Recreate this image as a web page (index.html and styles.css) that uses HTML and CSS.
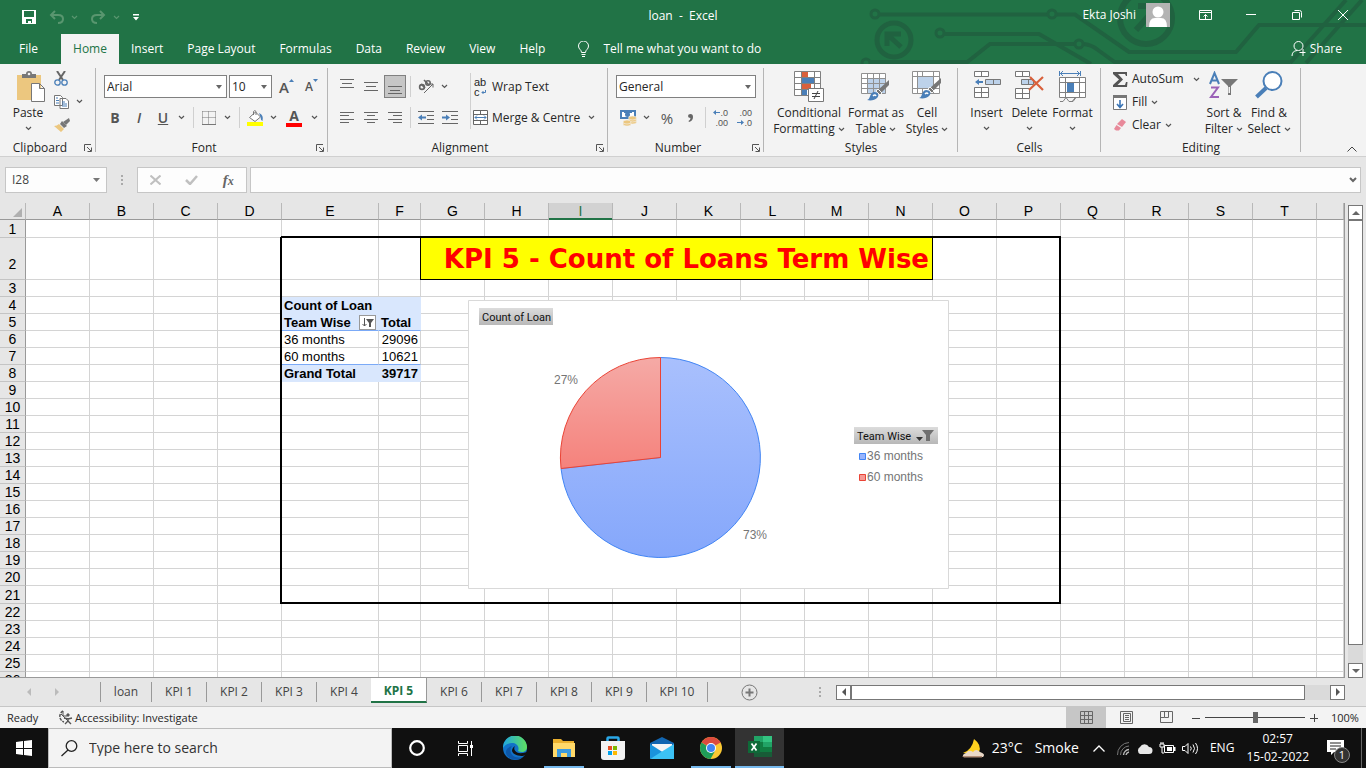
FILE: index.html
```html
<!DOCTYPE html>
<html lang="en">
<head>
<meta charset="utf-8">
<title>loan - Excel</title>
<link rel="stylesheet" href="styles.css">
</head>
<body>
<svg class="sprite" aria-hidden="true">
  <symbol id="chev" viewBox="0 0 7 5"><path d="M1 1l2.500 2.500L6 1" fill="none" stroke="currentColor" stroke-width="1.200"/></symbol>
  <symbol id="launch" viewBox="0 0 8 8"><path d="M.5 7V.5H7M3 3l4 4M7.500 3.500v4h-4" fill="none" stroke="#555"/></symbol>
  <symbol id="brush" viewBox="0 0 24 22"><path d="M23 1v5l-8 8-3-3z" fill="#777"/><path d="M12 10l4 4-2 2-4-4z" fill="#777" stroke="#f3f3f3"/><path d="M1 21c4-1 2-7 7-8 4 0 6 3 3 6-2 2-6 3-10 2z" fill="#4a7fb8"/><path d="M7 17q2-2 3 0" stroke="#fff" fill="none" stroke-width="1.500"/></symbol>
</svg>

<header class="top">
  <svg class="circuit" width="526" height="64" viewBox="0 0 526 64" fill="none" stroke="#206240" stroke-width="4" aria-hidden="true">
    <circle cx="35" cy="14" r="4" stroke-width="3"/><path d="M39 14.500h168M216 14.500h19L289 52h107l23-27h107"/>
    <circle cx="212" cy="14" r="4" stroke-width="3"/>
    <circle cx="100" cy="33" r="4" stroke-width="3"/><path d="M104 34h95l52 30"/>
    <path d="M126 63l24-19h85M244 44q8 1 14 6l18 13"/><circle cx="239" cy="44" r="4" stroke-width="3"/>
    <circle cx="26" cy="63" r="4" stroke-width="3"/><path d="M30 62h98M274 62h176"/>
    <circle cx="54" cy="40" r="17" stroke-width="5"/><path d="M47 46V34h14M48 35l13 12" stroke-width="5"/>
    <circle cx="306" cy="18" r="26" stroke-width="6"/><path d="M318 24V6h-20M316 8l-20 22" stroke-width="6"/>
    <path d="M450 63L506 0M466 63L522 0"/>
  </svg>
  <div class="titlebar">
    <div class="quick">
      <button aria-label="Save"><svg width="14" height="14"><path d="M0 0h14v14H0z" fill="#fff"/><path d="M2 1h10v6H2zM4 9h6v4H9v-2H6v2H4z" fill="#217346"/></svg></button>
      <button class="dim" aria-label="Undo"><svg width="15" height="14" fill="none" stroke="currentColor" stroke-width="2"><path d="M6 1L2 5l4 4M2 5h7q5 0 5 4t-5 4"/></svg><svg class="chev"><use href="#chev"/></svg></button>
      <button class="dim" aria-label="Redo"><svg width="15" height="14" fill="none" stroke="currentColor" stroke-width="2"><path d="M9 1l4 4-4 4M13 5H6Q1 5 1 9t5 4"/></svg><svg class="chev"><use href="#chev"/></svg></button>
      <button aria-label="Customise"><svg width="6" height="7"><path d="M0 0h6v1.500H0zM0 3h6L3 6.500z" fill="#fff"/></svg></button>
    </div>
    <div class="doc">loan&nbsp; -&nbsp; Excel</div>
    <div class="account">
      <span>Ekta Joshi</span>
      <svg width="24" height="24"><path d="M0 0h24v24H0z" fill="#b3b3b3"/><circle cx="12" cy="9" r="5.500" fill="#fff"/><path d="M3 24q0-9 6-9h6q6 0 6 9z" fill="#fff"/></svg>
    </div>
    <div class="window">
      <button aria-label="Ribbon options"><svg width="13" height="10" fill="none" stroke="#fff"><path d="M.5.500h12v9H.5zM.5 2.500h12M6.500 9V4.500M4.500 6.500l2-2 2 2"/></svg></button>
      <button aria-label="Minimise"><svg width="10" height="2"><path d="M0 0h10v1H0z" fill="#fff"/></svg></button>
      <button aria-label="Restore"><svg width="10" height="10" fill="none" stroke="#fff"><path d="M.5 2.500h7v7h-7zM2.500.500h5q2 0 2 2v5"/></svg></button>
      <button aria-label="Close"><svg width="10" height="10" stroke="#fff"><path d="M0 0l10 10M10 0L0 10"/></svg></button>
    </div>
  </div>
  <nav class="tabs">
    <button class="file">File</button><button class="on">Home</button><button>Insert</button><button>Page Layout</button><button>Formulas</button><button>Data</button><button>Review</button><button>View</button><button>Help</button>
    <button class="tell"><svg width="11" height="16" fill="none" stroke="#fff"><path d="M3.500 11.500c0-3-3-3-3-6.500a5 5 0 0110 0c0 3.500-3 3.500-3 6.500zM3.500 13.500h4M4 15.500h3"/></svg>Tell me what you want to do</button>
    <button class="share"><svg width="15" height="16" fill="none" stroke="#fff"><circle cx="7.500" cy="5" r="4.500"/><path d="M1 15q0-5 5-5.500M12 8v7M8.500 11.500h6"/></svg>Share</button>
  </nav>
</header>

<section class="ribbon">
  <div class="group clip">
    <div class="body">
      <button class="big paste"><svg width="28" height="31"><path d="M0 4h24v25H0z" fill="#ecc77f"/><path d="M5 3h4q0-3 3-3t3 3h4v4H5z" fill="#777"/><circle cx="12" cy="3" r="1.300" fill="#f3f3f3"/><path d="M14.500 12.500h8l5 5v13h-13zM22.500 12.500v5h5" fill="#fff" stroke="#777"/></svg><span>Paste</span><svg class="chev"><use href="#chev"/></svg></button>
      <div class="stack">
        <button aria-label="Cut"><svg width="14" height="15" fill="none"><path d="M3 0l6 9M11 0L5 9" stroke="#666" stroke-width="2"/><circle cx="3.500" cy="11.500" r="2.700" stroke="#4a7fb8" stroke-width="1.300"/><circle cx="10.500" cy="11.500" r="2.700" stroke="#4a7fb8" stroke-width="1.300"/></svg></button>
        <button aria-label="Copy"><svg width="15" height="14" fill="#fff" stroke="#777"><path d="M.5.500h6l2 2v8h-8zM6 3.500h6l2.500 2.500v7.500H6z"/><path d="M2 3h2M2 5.500h3M2 8h3M8 7h3M8 9h5M8 11h5" stroke="#4a7fb8"/></svg><svg class="chev"><use href="#chev"/></svg></button>
        <button aria-label="Format painter"><svg width="16" height="14"><path d="M15 0l1 3-4 4-3-3z" fill="#777"/><path d="M8 3l5 5-3 2-4-4z" fill="#777"/><path d="M5 6l5 5-3 3L0 8q3 0 5-2z" fill="#ecc77f"/></svg></button>
      </div>
    </div>
    <div class="caption"><span>Clipboard</span><button aria-label="Clipboard settings"><svg width="8" height="8"><use href="#launch"/></svg></button></div>
  </div>

  <div class="group font">
    <div class="body rows">
      <div class="row">
        <label class="combo name"><select aria-label="Font"><option>Arial</option></select></label>
        <label class="combo size"><select aria-label="Font size"><option>10</option></select></label>
        <button class="ib grow" aria-label="Increase font size"><b>A</b><svg width="5" height="3"><path d="M0 3h5L2.500 0z" fill="#4a7fb8"/></svg></button>
        <button class="ib shrink" aria-label="Decrease font size"><b>A</b><svg width="5" height="3"><path d="M0 0h5L2.500 3z" fill="#4a7fb8"/></svg></button>
      </div>
      <div class="row">
        <button class="ib"><b>B</b></button><button class="ib"><i>I</i></button><button class="ib"><u>U</u></button><button class="cb" aria-label="Underline styles"><svg class="chev"><use href="#chev"/></svg></button>
        <span class="sep"></span>
        <button class="ib" aria-label="Borders"><svg width="14" height="14" fill="none" stroke="#777" stroke-dasharray="1 1"><path d="M.5.500h13M.5.500v13M13.500.500v13M6.500.500v13M.5 6.500h13"/><path d="M0 13.500h14" stroke-dasharray="none"/></svg></button><button class="cb" aria-label="Border styles"><svg class="chev"><use href="#chev"/></svg></button>
        <span class="sep"></span>
        <button class="ib" aria-label="Fill colour"><svg width="17" height="16"><path d="M2.500 7.500l6-5.500 5 5-5.500 4.500zM6.500 5V1.500q1.500-2 2.500 0V5" fill="#fff" stroke="#777"/><path d="M12 3q5 2 3.500 8q-2-1-2-4z" fill="#4a7fb8"/><path d="M0 12h16v4H0z" fill="#ff0"/></svg></button><button class="cb" aria-label="Fill colours"><svg class="chev"><use href="#chev"/></svg></button>
        <button class="ib wide colour" aria-label="Font colour"><b>A</b></button><button class="cb" aria-label="Font colours"><svg class="chev"><use href="#chev"/></svg></button>
      </div>
    </div>
    <div class="caption"><span>Font</span><button aria-label="Font settings"><svg width="8" height="8"><use href="#launch"/></svg></button></div>
  </div>

  <div class="group align">
    <div class="body">
      <div class="rows">
        <div class="row">
          <button class="ib" aria-label="Top align"><svg width="14" height="16" stroke="#666"><path d="M0 .5h14M2 4.500h10M0 8.500h14"/></svg></button>
          <button class="ib" aria-label="Middle align"><svg width="14" height="16" stroke="#666"><path d="M0 3.500h14M2 7.500h10M0 11.500h14"/></svg></button>
          <button class="ib pressed" aria-label="Bottom align"><svg width="14" height="16" stroke="#666"><path d="M0 7.500h14M2 11.500h10M0 14.500h14"/></svg></button>
          <span class="sep"></span>
          <button class="ib" aria-label="Orientation"><svg width="17" height="15" fill="none" stroke="#666"><g stroke-width="1.600"><circle cx="4" cy="8" r="2.400"/><path d="M3 5l4 4M6 1l5 5"/><circle cx="10" cy="4" r="2.200"/></g><path d="M6 14L15 5M11.500 5H15v3.500"/></svg></button><button class="cb" aria-label="Orientations"><svg class="chev"><use href="#chev"/></svg></button>
        </div>
        <div class="row">
          <button class="ib" aria-label="Left align"><svg width="14" height="13" stroke="#666"><path d="M0 1.500h14M0 4.500h9M0 8.500h14M0 11.500h9"/></svg></button>
          <button class="ib" aria-label="Centre align"><svg width="14" height="13" stroke="#666"><path d="M0 1.500h14M3 4.500h8M0 8.500h14M3 11.500h8"/></svg></button>
          <button class="ib" aria-label="Right align"><svg width="14" height="13" stroke="#666"><path d="M0 1.500h14M5 4.500h9M0 8.500h14M5 11.500h9"/></svg></button>
          <span class="sep"></span>
          <button class="ib" aria-label="Decrease indent"><svg width="16" height="13"><path d="M0 .5h16M9 4.500h7M9 8.500h7M0 12.500h16" stroke="#666"/><path d="M0 6.500l4-3v2h4v2H4v2z" fill="#4a7fb8"/></svg></button>
          <button class="ib" aria-label="Increase indent"><svg width="16" height="13"><path d="M0 .5h16M9 4.500h7M9 8.500h7M0 12.500h16" stroke="#666"/><path d="M8 6.500l-4-3v2H0v2h4v2z" fill="#4a7fb8"/></svg></button>
        </div>
      </div>
      <span class="sep tall"></span>
      <div class="rows wraps">
        <button class="row wrap"><span class="abc"><span>ab</span><span>c<svg width="5" height="5" fill="none" stroke="#4a7fb8"><path d="M4.500 0v2.500H1M2.500 1L1 2.500 2.500 4"/></svg></span></span>Wrap Text</button>
        <div class="row"><button class="merge"><svg width="15" height="15" fill="#fff" stroke="#666"><path d="M.5.500h14v14H.5zM.5 4.500h14M.5 10.500h14M7.500.500v4M7.500 10.500v4"/><path d="M2 7.500h11M4 5.500l-2 2 2 2M11 5.500l2 2-2 2" stroke="#4a7fb8" fill="none"/></svg>Merge &amp; Centre</button><button class="cb" aria-label="Merge options"><svg class="chev"><use href="#chev"/></svg></button></div>
      </div>
    </div>
    <div class="caption"><span>Alignment</span><button aria-label="Alignment settings"><svg width="8" height="8"><use href="#launch"/></svg></button></div>
  </div>

  <div class="group number">
    <div class="body rows">
      <div class="row"><label class="combo format"><select aria-label="Number format"><option>General</option></select></label></div>
      <div class="row">
        <button class="ib" aria-label="Accounting format"><svg width="17" height="16"><path d="M0 0h16v9H0z" fill="#4a7fb8"/><path d="M2 2h2v1h8V2h2v5H2z" fill="#fff"/><circle cx="7.500" cy="4.500" r="2.500" fill="#4a7fb8"/><g fill="#ecc77f" stroke="#f3f3f3" stroke-width=".6"><ellipse cx="12.500" cy="12" rx="4" ry="2"/><ellipse cx="12.500" cy="10" rx="4" ry="2"/><ellipse cx="12.500" cy="8" rx="4" ry="2"/><ellipse cx="7" cy="14" rx="4" ry="2"/><ellipse cx="7" cy="12" rx="4" ry="2"/></g></svg></button><button class="cb" aria-label="Currencies"><svg class="chev"><use href="#chev"/></svg></button>
        <button class="ib pct">%</button><button class="ib comma" aria-label="Comma style"><svg width="5" height="8"><path d="M0 2q0-2 2.500-2T5 3q0 4-4 5l-.5-1q2-1 2-3Q0 4 0 2z" fill="#666"/></svg></button>
        <span class="sep"></span>
        <button class="ib dec" aria-label="Increase decimal"><span><svg width="7" height="5"><path d="M0 2.500L3 0v2h4v1H3v2z" fill="#4a7fb8"/></svg>.0</span><span>.00</span></button>
        <button class="ib dec" aria-label="Decrease decimal"><span>.00</span><span><svg width="7" height="5"><path d="M7 2.500L4 0v2H0v1h4v2z" fill="#4a7fb8"/></svg>.0</span></button>
      </div>
    </div>
    <div class="caption"><span>Number</span><button aria-label="Number settings"><svg width="8" height="8"><use href="#launch"/></svg></button></div>
  </div>

  <div class="group styles">
    <div class="body">
      <button class="big cond"><svg width="30" height="31"><path d="M.5.500h26v24H.5z" fill="#fff"/><path d="M8 1h6v5H8zM8 13h9v5H8z" fill="#d9603b"/><path d="M8 7h12v5H8zM8 19h5v5H8z" fill="#4a7fb8"/><path d="M.5.500h26v24H.5zM.5 6.500h26M.5 12.500h26M.5 18.500h26M7.500.500v24M20.500.500v24" fill="none" stroke="#808080"/><path d="M14.500 17.500h15v13h-15z" fill="#fff" stroke="#777"/><path d="M18 22.500h8M18 25.500h8M24 20l-4 8" stroke="#444"/></svg><span>Conditional<br>Formatting <svg class="chev"><use href="#chev"/></svg></span></button>
      <button class="big fmt"><svg width="30" height="31"><path d="M.5 2.500h24v20H.5z" fill="#fff"/><path d="M6 8h19v15H6z" fill="#bdd2ea"/><path d="M.5 2.500h24v20H.5zM.5 7.500h24M.5 12.500h24M.5 17.500h24M6.500 2.500v20M12.500 2.500v20M18.500 2.500v20" fill="none" stroke="#909090"/><use href="#brush" x="5" y="8" width="24" height="22"/></svg><span>Format as<br>Table <svg class="chev"><use href="#chev"/></svg></span></button>
      <button class="big cell"><svg width="30" height="31"><path d="M.5.500h27v22H.5z" fill="#fff"/><path d="M.5.500h27v22H.5zM.5 5.500h27M.5 17.500h27M5.500.500v22M21.500.500v22M10.500.500v22" fill="none" stroke="#909090"/><path d="M6 6h15v11H6z" fill="#bdd2ea"/><use href="#brush" x="6" y="6" width="24" height="22"/></svg><span>Cell<br>Styles <svg class="chev"><use href="#chev"/></svg></span></button>
    </div>
    <div class="caption"><span>Styles</span></div>
  </div>

  <div class="group cells">
    <div class="body">
      <button class="big"><svg width="28" height="31"><g fill="#fff" stroke="#777"><path d="M1.500.500h14v5h-14zM8.500.500v5M1.500 16.500h14v10h-14zM1.500 21.500h14M8.500 16.500v10"/><path d="M12.500 8.500h15v5h-15zM20.500 8.500v5" fill="#bdd2ea"/></g><path d="M2 11l4-3v2h4v2H6v2z" fill="#4a7fb8"/></svg><span>Insert</span><svg class="chev"><use href="#chev"/></svg></button>
      <button class="big"><svg width="30" height="31"><g fill="#fff" stroke="#777"><path d="M.5.500h14v5H.5zM7.500.500v5M.5 17.500h14v10H.5zM.5 22.500h14M7.500 17.500v10"/><path d="M6.500 8.500h12v5h-12zM13.500 8.500v5" fill="#bdd2ea"/></g><path d="M15 6l13 13M28 6L14 19" stroke="#d9603b" stroke-width="2.200"/></svg><span>Delete</span><svg class="chev"><use href="#chev"/></svg></button>
      <button class="big"><svg width="28" height="31" fill="none"><path d="M.5 6.500h26v20H.5z" fill="#fff"/><path d="M.5 6.500h26v20H.5zM.5 11.500h26M.5 21.500h26M6.500 6.500v20M20.500 6.500v20M1 30.500h3l3-4 3 4h4l3-4M13.500 30l3-3.500" stroke="#808080"/><path d="M8 12h7v9H8z" fill="#4a7fb8"/><path d="M1 2.500h20M4 0L1.500 2.500 4 5M18 0l2.500 2.500L18 5M.5 0v5M21.500 0v5" stroke="#4a7fb8"/></svg><span>Format</span><svg class="chev"><use href="#chev"/></svg></button>
    </div>
    <div class="caption"><span>Cells</span></div>
  </div>

  <div class="group editing">
    <div class="body">
      <div class="lines">
        <button><svg width="15" height="15"><path d="M0 0h14v4h-1l-1-2H5l5 5.500L4.500 13H12l1-3h1.500l-.5 5H0v-2l6-5.500L0 2z" fill="#555"/></svg><span>AutoSum</span><svg class="chev far"><use href="#chev"/></svg></button>
        <button><svg width="15" height="15"><path d="M.5.500h13v14H.5z" fill="#fff" stroke="#777"/><path d="M0 0h14v3H0z" fill="#777"/><path d="M7 5v7M4 9l3 3.500L10 9" fill="none" stroke="#3a74b4" stroke-width="1.600"/></svg><span>Fill</span><svg class="chev"><use href="#chev"/></svg></button>
        <button><svg width="15" height="15"><path d="M9 1l4 3-4 5-5-3z" fill="#e8899a"/><path d="M3.500 7l4.500 3-2 2.500H3L1 11z" fill="#e8899a"/></svg><span>Clear</span><svg class="chev"><use href="#chev"/></svg></button>
      </div>
      <button class="big sort"><svg width="30" height="31" fill="none"><path d="M1 13L5.500 2 10 13M2.500 9.500h6" stroke="#4a7fb8" stroke-width="2"/><path d="M2 16.500h7L2 26h8" stroke="#9b62b8" stroke-width="2"/><path d="M12 8h17l-7 7v9h-3v-9z" fill="#777"/><path d="M19.500 16h1.500v6h-1.500z" fill="#f3f3f3"/></svg><span>Sort &amp;<br>Filter <svg class="chev"><use href="#chev"/></svg></span></button>
      <button class="big find"><svg width="28" height="31" fill="none" stroke="#4a7fb8"><circle cx="17.500" cy="10" r="9" fill="#fff" stroke-width="2"/><path d="M11 17L1.500 26" stroke-width="4"/></svg><span>Find &amp;<br>Select <svg class="chev"><use href="#chev"/></svg></span></button>
    </div>
    <div class="caption"><span>Editing</span></div>
  </div>
  <button class="collapse" aria-label="Collapse ribbon"><svg width="10" height="6" fill="none" stroke="#444"><path d="M.5 5.500L5 1l4.500 4.500"/></svg></button>
</section>

<section class="formula">
  <label class="namebox"><input value="I28" aria-label="Name box"><svg width="7" height="4"><path d="M0 0h7L3.500 4z" fill="#777"/></svg></label>
  <svg class="dots" width="2" height="10" fill="#aaa"><path d="M0 0h2v2H0zM0 4h2v2H0zM0 8h2v2H0z"/></svg>
  <div class="fx">
    <button aria-label="Cancel"><svg width="11" height="10" stroke="#c0c0c0" stroke-width="2"><path d="M.5.500l10 9M10.500.500l-10 9"/></svg></button>
    <button aria-label="Enter"><svg width="13" height="10" fill="none" stroke="#c0c0c0" stroke-width="2.500"><path d="M1 5l4 4 7-8"/></svg></button>
    <button aria-label="Insert function"><i>f<small>x</small></i></button>
  </div>
  <label class="bar"><input aria-label="Formula bar"><svg width="8" height="6" fill="none" stroke="#666" stroke-width="2"><path d="M1 1l3 3 3-3"/></svg></label>
</section>

<main class="work">
  <div class="sheet">
    <table id="grid"></table>
    <svg class="chart" width="481" height="289" viewBox="0 0 481 289">
      <defs>
        <linearGradient id="blue" x2="0" y2="1"><stop stop-color="#a9c0fd"/><stop offset="1" stop-color="#85a7fb"/></linearGradient>
        <linearGradient id="red" x2="0" y2="1"><stop stop-color="#f5aaa6"/><stop offset="1" stop-color="#f5827c"/></linearGradient>
        <linearGradient id="grey" x2="0" y2="1"><stop stop-color="#dcdcdc"/><stop offset="1" stop-color="#b8b8b8"/></linearGradient>
      </defs>
      <path d="M.5.500h480v288H.5z" fill="#fff" stroke="#d9d9d9"/>
      <path d="M192.500 157.500V57.500A100 100 0 1193 168.500z" fill="url(#blue)" stroke="#4285f4"/>
      <path d="M192.500 157.500L93 168.500A100 100 0 01192.500 57.500z" fill="url(#red)" stroke="#ea4335"/>
      <path d="M11 8h74v17H11z" fill="url(#grey)"/><path d="M386 127h84v17h-84z" fill="url(#grey)"/>
      <g class="ui"><text x="14" y="21">Count of Loan</text><text x="389" y="140">Team Wise</text></g>
      <path d="M448 137h7l-3.500 4z" fill="#333"/><path d="M454 130h12l-4 5v6h-4v-6z" fill="#707070"/>
      <g class="lab"><text x="86" y="84">27%</text><text x="275" y="239">73%</text><text x="399" y="160">36 months</text><text x="399" y="181">60 months</text></g>
      <path d="M391.500 153.500h6v6h-6z" fill="#98b4fc" stroke="#4285f4"/><path d="M391.500 174.500h6v6h-6z" fill="#f59a95" stroke="#ea4335"/>
    </svg>
  </div>
  <div class="vscroll">
    <button aria-label="Scroll up"><svg width="8" height="4"><path d="M0 4h8L4 0z" fill="#666"/></svg></button><div class="thumb"></div>
    <button aria-label="Scroll down"><svg width="8" height="4"><path d="M0 0h8L4 4z" fill="#666"/></svg></button>
  </div>
</main>

<footer>
  <div class="sheets">
    <div class="arrows"><svg width="4" height="8"><path d="M4 0v8L0 4z" fill="#bbb"/></svg><svg width="4" height="8"><path d="M0 0v8l4-4z" fill="#bbb"/></svg></div>
    <button class="first">loan</button><button>KPI 1</button><button>KPI 2</button><button>KPI 3</button><button>KPI 4</button><button class="on">KPI 5</button><button>KPI 6</button><button>KPI 7</button><button>KPI 8</button><button>KPI 9</button><button class="last">KPI 10</button>
    <button class="add" aria-label="New sheet"><svg width="17" height="17" fill="none" stroke="#777"><circle cx="8.500" cy="8.500" r="7.500"/><path d="M8.500 4.500v8M4.500 8.500h8" stroke-width="2"/></svg></button>
    <svg class="dots" width="2" height="10" fill="#aaa"><path d="M0 0h2v2H0zM0 4h2v2H0zM0 8h2v2H0z"/></svg>
    <div class="hscroll"><button aria-label="Scroll left"><svg width="4" height="8"><path d="M4 0v8L0 4z" fill="#555"/></svg></button><div class="thumb"></div><button aria-label="Scroll right"><svg width="4" height="8"><path d="M0 0v8l4-4z" fill="#555"/></svg></button></div>
  </div>
  <div class="status">
    <span class="ready">Ready</span>
    <svg width="16" height="15" fill="none" stroke="#555"><path d="M6 1A6 6 0 007 12" stroke-width="1.500" stroke-dasharray="3 1"/><path d="M6 1v5h4"/><circle cx="11" cy="5" r="1.200" fill="#555"/><path d="M7 8l4 1 4-1M11 8v3l-3 3M11 11l3 3" stroke-width="1.400"/><path d="M4 4l9 9"/></svg>
    <span>Accessibility: Investigate</span>
    <div class="views">
      <button class="on" aria-label="Normal"><svg width="13" height="13" fill="none" stroke="#666"><path d="M.5.500h12v12H.5zM.5 4.500h12M.5 8.500h12M4.500.500v12M8.500.500v12"/></svg></button>
      <button aria-label="Page layout"><svg width="13" height="13" fill="none" stroke="#666"><path d="M.5.500h12v12H.5zM3.500 2.500h7v8h-7zM5 4.500h4M5 6.500h4M5 8.500h4"/></svg></button>
      <button aria-label="Page break"><svg width="13" height="13" fill="none" stroke="#666"><path d="M.5.500h12v11H.5zM4.500.500v6h4v-6M.5 6.500h4"/></svg></button>
    </div>
    <button class="zoom" aria-label="Zoom out"><svg width="8" height="8" stroke="#444"><path d="M0 4.500h8"/></svg></button><input type="range" aria-label="Zoom" value="50"><button class="zoom" aria-label="Zoom in"><svg width="8" height="8" stroke="#444"><path d="M0 4.500h8M4.500 0v8"/></svg></button>
    <span class="level">100%</span>
  </div>
  <div class="taskbar">
    <button class="start" aria-label="Start"><svg width="16" height="16" fill="#fff"><path d="M0 2l7-1v7H0zM8 1l8-1v8H8zM0 9h7v6l-7-1zM8 9h8v7l-8-1z"/></svg></button>
    <label class="search"><svg width="17" height="17" fill="none" stroke="#222" stroke-width="1.300"><circle cx="10.500" cy="6" r="5.300"/><path d="M7 10L.5 16"/></svg><input placeholder="Type here to search" aria-label="Search"></label>
    <button aria-label="Cortana"><svg width="16" height="16" fill="none" stroke="#fff" stroke-width="2.200"><circle cx="8" cy="8" r="6.800"/></svg></button>
    <button aria-label="Task view"><svg width="16" height="15" fill="none" stroke="#fff"><path d="M.5 0v2.500h9V0M.5 4.500h9v6h-9zM.5 15v-2.500h9V15M13.500 0v15"/><path d="M12 4h3v3h-3z" fill="#fff" stroke="none"/></svg></button>
    <button aria-label="Edge"><svg width="24" height="24"><defs><linearGradient id="ea"><stop stop-color="#1fa6e0"/><stop offset="1" stop-color="#5fe05f"/></linearGradient></defs><circle cx="12" cy="12" r="12" fill="#1272c8"/><path d="M0 12A12 12 0 0124 11c0 5-5 6-9 4 2-5-2-8-6-8-5 0-8 3-9 5z" fill="url(#ea)"/><path d="M9 10c-4 5 0 14 11 11-6 5-16 2-17-4-.5-4 3-6 6-7z" fill="#0d57a8"/><path d="M12 10c-2 3 0 8 8 7l4-1v2l-4 2c-4 0-10-1-11-5 0-2 1-4 3-5z" fill="#111"/></svg></button>
    <button class="run" aria-label="File Explorer"><svg width="22" height="20"><path d="M0 1h8l2 2h11v15H0z" fill="#eab02e"/><path d="M0 5h22v14H0z" fill="#ffd969"/><path d="M4 11h14v8h-4v-4H8v4H4z" fill="#3c9be0"/></svg></button>
    <button aria-label="Store"><svg width="24" height="24"><path d="M6.500 7V2.500q0-1 1-1h9q1 0 1 1V7" fill="none" stroke="#2aa8e8" stroke-width="2.500"/><path d="M0 5h24v16q0 3-3 3H3q-3 0-3-3z" fill="#f3f3f3"/><path d="M7 10h4v4H7z" fill="#e74e25"/><path d="M12 10h4v4h-4z" fill="#7eb900"/><path d="M7 15h4v4H7z" fill="#00a2ed"/><path d="M12 15h4v4h-4z" fill="#fdb900"/></svg></button>
    <button aria-label="Mail"><svg width="24" height="22"><path d="M0 6l12-6 12 6v8H0z" fill="#1265b0"/><path d="M2 7h20v7l-10 4L2 12z" fill="#f5f5f5"/><path d="M0 7l14 9-14 6z" fill="#1a93dc"/><path d="M24 7v15H0z" fill="#3cc2f5"/></svg></button>
    <button class="run" aria-label="Chrome"><svg width="22" height="22"><circle cx="11" cy="11" r="11" fill="#fbc933"/><path d="M11 11L1.500 5.500A11 11 0 0120.500 5.500z" fill="#dd4b3e"/><path d="M1.500 5.500A11 11 0 0010.500 22L15 14z" fill="#1f9d58"/><path d="M11 6h9.800a11 11 0 00-1-2H9z" fill="#dd4b3e"/><circle cx="11" cy="11" r="5" fill="#fff"/><circle cx="11" cy="11" r="4" fill="#4285f4"/></svg></button>
    <button class="active" aria-label="Excel"><svg width="24" height="22"><path d="M6 0h18v21H6z" fill="#107c41"/><path d="M6 0h9v6H6z" fill="#21a366"/><path d="M15 0h9v6h-9z" fill="#33c481"/><path d="M15 6h9v5h-9z" fill="#21a366"/><path d="M6 16h18v5H6z" fill="#185c37"/><path d="M0 5h12v12H0z" fill="#0e6a38"/><path d="M3.500 7.500l5 7M8.500 7.500l-5 7" stroke="#fff" stroke-width="1.700"/></svg></button>
    <div class="tray">
      <button class="weather"><svg width="22" height="19"><path d="M12 0q8 6 5 13l-8 2-8-1q9-3 11-14z" fill="#ffd21f"/><path d="M2 18q-3-2 2-4 3-4 7-1 3-4 7 0 6 2 3 5z" fill="#e9d8c8"/><path d="M0 17h20v1.500H2z" fill="#b28e78"/></svg><span>23°C</span><span>Smoke</span></button>
      <button aria-label="Show hidden icons"><svg width="12" height="7" fill="none" stroke="#fff" stroke-width="1.300"><path d="M.5 6.500L6 1l5.500 5.500"/></svg></button>
      <button class="net" aria-label="Network"><svg width="13" height="13" fill="none"><path d="M.5 13A12 12 0 0112 .5M3.500 13A9 9 0 0112 4" stroke="#777"/><path d="M6.500 13A6 6 0 0112 7.500M9 13a4 4 0 013-3" stroke="#bbb" stroke-width="1.400"/></svg></button>
      <button aria-label="OneDrive"><svg width="17" height="12"><path d="M4 12a4 4 0 010-7 5 5 0 019 0 3.500 3.500 0 010 7z" fill="#e8e8e8"/></svg></button>
      <button aria-label="Battery"><svg width="17" height="12" fill="none" stroke="#fff"><path d="M5.500 3.500h9v7h-9z"/><path d="M8 5h5v4H8zM15 5h1.500v4H15z" fill="#fff" stroke="none"/><path d="M1 2h4v3H1zM2 0v2M4 0v2M3 5v6h2"/></svg></button>
      <button aria-label="Volume"><svg width="17" height="13" fill="none" stroke="#fff"><path d="M.5 4.500H3l3-3v10l-3-3H.5zM8.500 4.500q1.500 2 0 4M11 2.500q3 4 0 8M13.500 1q4 5.500 0 11"/></svg></button>
      <span class="lang">ENG</span>
      <span class="clock">02:57<br>15-02-2022</span>
      <button class="note" aria-label="Notifications"><svg width="17" height="16"><path d="M0 0h17v12H7l-3 3v-3H0z" fill="#fff"/><path d="M3 3h11M3 6h11M3 9h6" stroke="#222"/></svg><span>1</span></button>
    </div>
  </div>
</footer>
<script src="script.js"></script>
</body>
</html>
```
FILE: script.js
```js
const columns = 'ABCDEFGHIJKLMNOPQRST'.split('');
const filter = '<button class="filter" aria-label="Filter Team Wise"><svg width="12" height="10"><path d="M2.500 0v8M.5 6l2 2 2-2" fill="none" stroke="#555"/><path d="M4 1h8L9 5v4H7V5z" fill="#555"/></svg></button>';
const cells = {
  E4: ['Count of Loan', 'pivot'], F4: ['', 'pivot'],
  E5: ['Team Wise' + filter, 'pivot rule'], F5: ['Total', 'pivot rule'],
  E6: ['36 months', ''], F6: ['29096', 'num'],
  E7: ['60 months', 'rule'], F7: ['10621', 'num rule'],
  E8: ['Grand Total', 'pivot'], F8: ['39717', 'pivot num']
};
const frameLeft = columns.indexOf('D');
const frameRight = columns.indexOf('P');

let html = '<colgroup><col class="c-head">' + columns.map(c =>
  `<col class="${c === 'E' ? 'c-e' : c === 'F' ? 'c-f' : 'c-std'}">`).join('') + '<col></colgroup>';
html += '<thead><tr><th class="corner"><svg width="9" height="9"><path d="M9 0v9H0z" fill="#b0b0b0"/></svg></th>' +
  columns.map(c => `<th${c === 'I' ? ' class="sel"' : ''}>${c}</th>`).join('') + '<th></th></tr></thead><tbody>';

for (let r = 1; r <= 26; r++) {
  html += `<tr class="${r === 2 ? 'title-row' : r === 1 || r === 21 ? 'edge-row' : ''}"><th>${r}</th>`;
  for (let i = 0; i <= columns.length; i++) {
    const col = columns[i];
    if (r === 2 && col === 'G') {
      html += '<td class="kpi" colspan="8">KPI 5 - Count of Loans Term Wise</td>';
      i += 7;
      continue;
    }
    const [text, style] = cells[col + r] || ['', ''];
    const cls = [style];
    if (r >= 2 && r <= 21 && (i === frameLeft || i === frameRight)) cls.push('fr');
    if ((r === 1 || r === 21) && i > frameLeft && i <= frameRight) cls.push('fb');
    html += `<td class="${cls.join(' ').trim()}">${text}</td>`;
  }
  html += '</tr>';
}
document.getElementById('grid').innerHTML = html + '</tbody>';
```
FILE: styles.css
```css
* { box-sizing: border-box; }
body { margin: 0; height: 100vh; display: flex; flex-direction: column; overflow: hidden; font: 12px/16px "Open Sans", "Noto Sans", sans-serif; color: #262626; background: #e6e6e6; }
button, input, select { font: inherit; color: inherit; background: none; border: 0; padding: 0; margin: 0; outline: 0; }
button { display: flex; align-items: center; justify-content: center; white-space: nowrap; }
svg { flex: none; display: block; }
.sprite { position: absolute; width: 0; height: 0; }
.chev { width: 7px; height: 5px; color: #555; }

/* Title bar and tabs */
.top { position: relative; flex: none; background: #217346; color: #fff; }
.circuit { position: absolute; right: 0; top: 0; }
.titlebar { position: relative; height: 34px; display: flex; align-items: center; }
.quick { flex: 1; display: flex; align-items: center; gap: 13px; padding-left: 22px; }
.quick button { gap: 7px; }
.dim, .dim .chev { color: #59966f; }
.doc { position: absolute; left: 0; right: 0; text-align: center; padding-bottom: 2px; }
.account { flex: 1; display: flex; align-items: center; justify-content: flex-end; gap: 10px; padding: 0 12px 4px 0; }
.window { display: flex; padding-bottom: 4px; }
.window button { width: 46px; height: 30px; }
.tabs { position: relative; display: flex; height: 30px; }
.tabs button { padding: 0 12px; }
.tabs .file { width: 61px; padding-right: 16px; }
.tabs .on { background: #f3f3f3; color: #217346; width: 58px; padding: 0; }
.tabs .tell { gap: 14px; padding-left: 21px; }
.tabs .share { margin-left: auto; gap: 4px; padding-right: 24px; }

/* Ribbon */
.ribbon { flex: none; display: flex; height: 93px; background: #f3f3f3; border-bottom: 1px solid #d0d0d0; padding-top: 4px; }
.group { display: flex; flex-direction: column; height: 84px; background: linear-gradient(#b5b5b5, #b5b5b5) right / 1px 100% no-repeat; }
.body { height: 72px; flex: none; display: flex; }
.caption { position: relative; flex: none; height: 16px; display: flex; justify-content: center; align-items: center; padding-right: 16px; }
.caption button { position: absolute; right: 4px; top: 4px; }
.clip { width: 96px; } .font { width: 232px; } .align { width: 280px; } .number { width: 156px; }
.styles { width: 194px; } .cells { width: 143px; } .editing { width: 200px; }
.styles .caption, .cells .caption, .editing .caption { padding-right: 0; }
.big { flex-direction: column; justify-content: flex-start; padding-top: 3px; line-height: 16px; }
.big > span { margin-top: 3px; text-align: center; }
.big > .chev { margin-top: 5px; }
.big span .chev { display: inline-block; vertical-align: 1px; }
.clip .body { padding-left: 8px; gap: 6px; }
.paste { width: 40px; }
.paste svg:first-child { margin-left: 6px; }
.stack { display: flex; flex-direction: column; gap: 8px; padding-top: 3px; align-items: flex-start; }
.stack button { gap: 7px; height: 15px; }
.rows { display: flex; flex-direction: column; gap: 6px; padding-top: 6px; }
.row { display: flex; align-items: center; height: 25px; }
.font .rows { padding-left: 7px; }
.combo { position: relative; height: 23px; border: 1px solid #808080; background: #fff; margin-right: 2px; }
.combo::after { content: ""; position: absolute; right: 4px; top: 9px; border: 3px solid transparent; border-top: 4px solid #666; border-bottom: 0; }
.combo select { appearance: none; width: 100%; height: 21px; padding: 0 2px; }
.name { width: 123px; } .size { width: 43px; } .format { width: 140px; }
.font .row:first-child { padding-left: 1px; }
.ib { width: 24px; height: 24px; color: #555; font-size: 14px; }
.ib b { font-weight: 700; }
.ib u, .ib i { font-weight: 600; }
.grow, .shrink { font-size: 15px; width: 25px; }
.grow b, .shrink b { font-weight: 600; }
.shrink { font-size: 12px; }
.grow svg, .shrink svg { margin-bottom: 12px; }
.cb { width: 12px; height: 24px; }
.sep { width: 1px; height: 21px; background: #d0d0d0; margin: 0 3px 0 6px; }
.sep.tall { height: 56px; margin: 5px 2px 0 8px; }
.wide { width: 28px; margin-left: 1px; }
.colour b { width: 16px; line-height: 15px; border-bottom: 4px solid red; }
.align .body { padding-left: 7px; }
.align .row .sep { margin: 0 3px; }
.pressed { background: #c6c6c6; border: 1px solid #808080; width: 22px; margin: 0 1px; height: 23px; }
.wraps .row { gap: 4px; }
.wraps .wrap { gap: 4px; justify-content: flex-start; padding-left: 1px; }
.abc { display: flex; flex-direction: column; width: 14px; font: 11px/10px "Liberation Sans", Arial, sans-serif; }
.abc span { display: flex; height: 10px; align-items: center; }
.abc svg { margin: 2px 0 0 1px; }
.merge { gap: 4px; }
.wraps .cb { margin-left: 1px; }
.number .rows { padding-left: 8px; }
.number .sep { margin: 0 2px 0 4px; }
.pct { font-size: 15px; margin-left: 3px; }
.comma { width: 22px; }
.dec { flex-direction: column; font: 9px/10px "Liberation Sans", Arial, sans-serif; align-items: flex-end; padding-right: 4px; }
.dec span { display: flex; align-items: center; height: 10px; }
.cond { width: 78px; margin-left: 6px; } .fmt { width: 56px; } .cell { width: 46px; }
.cells .body { padding-left: 7px; }
.cells .big { width: 43px; }
.lines { display: flex; flex-direction: column; gap: 7px; padding: 3px 0 0 12px; width: 100px; }
.lines button { justify-content: flex-start; height: 16px; gap: 4px; }
.lines .far { margin-left: 5px; }
.sort { width: 46px; } .find { width: 44px; }
.collapse { margin: auto 9px 0 auto; padding-bottom: 4px; }

/* Formula bar */
.formula { flex: none; display: flex; align-items: center; height: 46px; padding: 0 5px; }
.formula label, .fx { display: flex; align-items: center; height: 26px; background: #fdfdfd; border: 1px solid #c6c6c6; }
.namebox { width: 102px; padding: 0 6px; }
.formula input { flex: 1; min-width: 0; color: #444; }
.dots { margin: 0 14px; }
.fx { width: 110px; justify-content: space-around; margin-right: 3px; }
.fx i { font: italic bold 15px "Liberation Serif", serif; color: #666; }
.fx small { font-size: 12px; }
.bar { flex: 1; padding: 0 3px 0 6px; }

/* Worksheet */
.work { flex: 1; min-height: 0; display: flex; }
.sheet { position: relative; flex: 1; overflow: hidden; border-right: 1px solid #999; border-bottom: 1px solid #999; background: #fff; }
table { width: 100%; table-layout: fixed; border-spacing: 0; font: 13px/16px "Liberation Sans", Arial, sans-serif; color: #000; }
.c-head { width: 26px; } .c-std { width: 64px; } .c-e { width: 97px; } .c-f { width: 42px; }
th { padding: 0; height: 17px; font-weight: 400; font-size: 14px; line-height: 16px; background: #e6e6e6; border-right: 1px solid #b8b8b8; border-bottom: 1px solid #999; }
tbody th { border-right-color: #999; border-bottom-color: #c4c4c4; }
.sel { background: #d2d2d2; color: #217346; border-bottom-color: #217346; box-shadow: inset 0 -1px #217346; }
.corner svg { margin: 2px 0 0 13px; }
td { padding: 1px 2px 0; height: 17px; line-height: 15px; overflow: hidden; white-space: nowrap; border-right: 1px solid #d4d4d4; border-bottom: 1px solid #d4d4d4; }
.edge-row > * { height: 18px; }
.title-row > * { height: 42px; }
tbody .title-row th { vertical-align: bottom; padding-bottom: 7px; }
.kpi { background: #ff0; color: red; border-color: #000; font: bold 26px/36px "DejaVu Sans", sans-serif; text-align: right; box-shadow: -1px 0 #000; padding: 0 3px 0 2px; }
.pivot { background: #d9e7fd; border-color: #d9e7fd; font-weight: 700; }
.rule { border-bottom-color: #7baaf7; }
.num { text-align: right; }
.filter { float: right; width: 17px; height: 15px; background: #fff; border: 1px solid #999; }
.fr, .fb { position: relative; overflow: visible; z-index: 1; }
.fr::after { content: ""; position: absolute; right: -1px; top: -1px; bottom: -1px; width: 2px; background: #000; }
.fb::before { content: ""; position: absolute; left: -1px; right: -1px; bottom: -1px; height: 2px; background: #000; }
.chart { position: absolute; left: 468px; top: 97px; z-index: 2; }
.ui { font: 11px Roboto, sans-serif; fill: #111; }
.lab { font: 12px "Liberation Sans", Arial, sans-serif; fill: #757575; }
.vscroll { flex: none; width: 15px; margin: 2px 3px 0; display: flex; flex-direction: column; background: #dadada; }
.vscroll button, .vscroll .thumb, .hscroll button, .hscroll .thumb { background: #fff; border: 1px solid #777; }
.vscroll button { height: 15px; }
.vscroll .thumb { flex: 1; margin-bottom: 18px; }

/* Sheet tabs */
.sheets { display: flex; align-items: center; height: 29px; border-bottom: 1px solid #c6c6c6; padding-right: 21px; color: #444; }
.arrows { display: flex; gap: 24px; width: 100px; padding-left: 27px; }
.sheets > button { width: 55px; height: 20px; border-right: 1px solid #999; }
.sheets .first { width: 52px; border-left: 1px solid #999; }
.sheets .on { width: 56px; height: 25px; margin: -3px 0 0 -1px; padding-top: 3px; background: #fff; color: #217346; font-weight: 700; border-bottom: 2px solid #217346; }
.sheets .last { width: 61px; }
.sheets .add { border: 0; width: 20px; margin: 0 60px 0 31px; }
.sheets .dots { margin: 0 15px 0 0; }
.hscroll { flex: 1; height: 15px; display: flex; background: #dadada; }
.hscroll button { width: 15px; }
.hscroll .thumb { flex: 1; margin-right: 25px; }

/* Status bar */
.status { display: flex; align-items: center; height: 21px; padding-left: 7px; background: #f3f3f3; font-size: 11px; }
.ready { width: 50px; }
.status > svg { margin-right: 2px; }
.views { display: flex; margin-left: auto; margin-right: 6px; align-self: stretch; }
.views button { width: 40px; }
.views .on { background: #c6c6c6; }
.status input { appearance: none; width: 100px; height: 11px; margin: 0 5px; background: linear-gradient(#444, #444) center / 100% 1px no-repeat; }
.status input::-webkit-slider-thumb { appearance: none; width: 5px; height: 11px; background: #666; }
.level { width: 48px; padding-left: 13px; }

/* Taskbar */
.taskbar { display: flex; height: 40px; background: #101010; color: #fff; }
.taskbar > button { width: 49px; }
.taskbar .start { width: 48px; }
.search { display: flex; align-items: center; gap: 11px; width: 344px; padding-left: 12px; background: #f3f3f3; border: 1px solid #bbb; color: #333; font-size: 14px; }
.search input { flex: 1; min-width: 0; }
.search input::placeholder { color: #333; opacity: 1; }
.run { background: linear-gradient(#76b9ed, #76b9ed) center bottom / 40px 2px no-repeat; }
.active { background: #333; border-bottom: 2px solid #76b9ed; }
.tray { margin-left: auto; display: flex; align-items: center; border-right: 1px solid #666; margin-right: 4px; gap: 6px; }
.weather { font-size: 14px; gap: 12px; margin-right: 8px; }
.weather span:first-of-type { margin-left: -4px; }
.net { margin-left: 6px; }
.lang { margin-left: 5px; }
.clock { text-align: center; line-height: 18px; margin-left: 6px; }
.note { position: relative; width: 46px; height: 40px; padding-right: 6px; }
.note span { position: absolute; right: 11px; top: 19px; width: 16px; height: 16px; border: 1px solid #888; border-radius: 8px; background: #333; font-size: 11px; line-height: 14px; }
```
